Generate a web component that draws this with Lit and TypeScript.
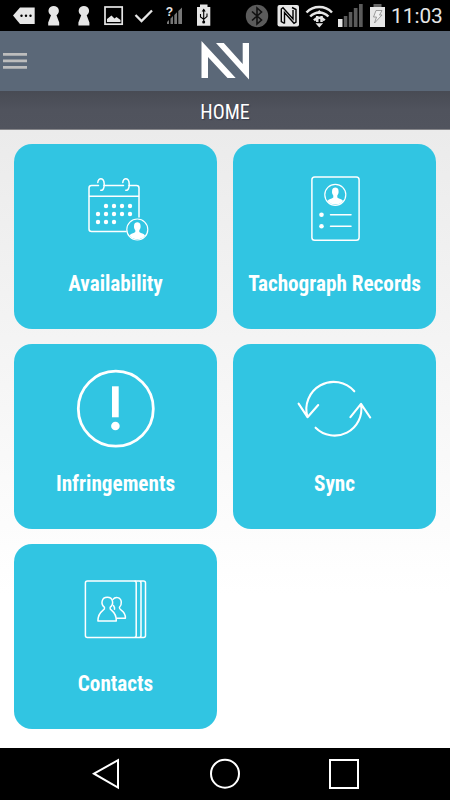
import { LitElement, html, svg, css } from "lit";
import { customElement, property } from "lit/decorators.js";

const person = (x: number, y: number) => svg`
  <g transform="translate(${x} ${y})">
    <circle r="10.5" fill="#31c5e2" stroke="#fff" stroke-width="1.2"/>
    <path fill="#fff" stroke="none" d="M-3.2 -4.2C-3.2 -8.2 3.2 -8.2 3.2 -4.2C3.6 -1.6 2.9 -.4 2 .8V2.6C4 4.2 6.6 4 7.8 6.2C4 11 -4 11 -7.8 6.2C-6.6 4 -4 4.2 -2 2.6V.8C-2.9 -.4 -3.6 -1.6 -3.2 -4.2Z"/>
  </g>`;

const dots = [
  [106, 206], [114, 206], [122, 206], [130, 206],
  [98, 214], [106, 214], [114, 214], [122, 214], [130, 214],
  [98, 222], [106, 222], [114, 222],
];

const tiles = [
  {
    label: "Availability",
    icon: html`<svg viewBox="72 164 88 88" fill="none" stroke="#fff" stroke-width="1.5" stroke-linecap="round">
      <path d="M98.5 185.6H91.5Q89 185.6 89 188.1V229Q89 231.5 91.5 231.5H126M104 185.6H123.5M129 185.6H136.5Q139 185.6 139 188.1V217M89 196.3H139"/>
      <path d="M97.8 182.5C98.3 177.2 104 177.2 104.2 184C104.3 188 103 191 100.8 190.2M122.8 182.5C123.3 177.2 129 177.2 129.2 184C129.3 188 128 191 125.8 190.2"/>
      ${dots.map(([x, y]) => svg`<circle cx=${x} cy=${y} r="2.2" fill="#fff" stroke="none"/>`)}
      ${person(137.3, 229.5)}
    </svg>`,
  },
  {
    label: "Tachograph Records",
    icon: html`<svg viewBox="291 164 88 88" fill="none" stroke="#fff" stroke-width="1.5" stroke-linecap="round">
      <rect x="311.9" y="177" width="47.2" height="63.3" rx="2.8"/>
      ${person(335.3, 194.8)}
      <path d="M330.5 214.7H351M330.5 226.2H351"/>
      <circle cx="321.5" cy="214.7" r="2.3" fill="#fff" stroke="none"/>
      <circle cx="321.5" cy="226.2" r="2.3" fill="#fff" stroke="none"/>
    </svg>`,
  },
  {
    label: "Infringements",
    icon: html`<svg viewBox="72 364 88 88" fill="#fff">
      <circle cx="115.8" cy="408.7" r="37.5" fill="none" stroke="#fff" stroke-width="2.8"/>
      <path d="M112 386.3H118.7V417.3H112Z"/>
      <circle cx="115.4" cy="426" r="4.3"/>
    </svg>`,
  },
  {
    label: "Sync",
    icon: html`<svg viewBox="291 364 88 88" fill="none" stroke="#fff" stroke-width="2.1" stroke-linecap="round" stroke-linejoin="round">
      <path d="M354.3 391.3A27.3 27.3 0 0 0 307.5 417M298.6 403.7L307.5 417.2L318.2 405"/>
      <path d="M315.6 427.7A26.8 26.8 0 0 0 361 404.2M350.4 417.2L361 403.9L370.2 417.5"/>
    </svg>`,
  },
  {
    label: "Contacts",
    icon: html`<svg viewBox="72 564 88 88" fill="none" stroke="#fff" stroke-width="1.5" stroke-linecap="round" stroke-linejoin="round">
      <rect x="85.4" y="580.9" width="50.8" height="56.6" rx="2"/>
      <path d="M135 580.9H139Q141 580.9 141 582.9V635.5Q141 637.5 139 637.5H135M139 580.9H143.5Q145.5 580.9 145.5 582.9V635.5Q145.5 637.5 143.5 637.5H139"/>
      <path d="M104.5 607.4C100.3 604 101.5 597.3 107.3 597.3C113.1 597.3 114.3 604 110.1 607.4C108.800 611 116.5 609.8 116.3 621.1H97.9C98 609.8 105.8 611 104.5 607.4Z"/>
      <path d="M113 599.4C115 596.5 120.8 596.7 121.3 602C121.5 605 120.8 606.2 119.4 607.3C118.5 610.8 125.6 609.3 125.4 618.2H116.8M113.5 605.5L114.5 607.6V609.3"/>
    </svg>`,
  },
];

@customElement("menu-tile")
export class MenuTile extends LitElement {
  @property() label = "";
  static styles = css`
    :host {
      display: flex;
      flex-direction: column;
      align-items: center;
      box-sizing: border-box;
      padding-top: 20px;
      border-radius: 18px;
      background: #31c5e2;
      color: #fff;
      font: 700 21.2px/28px "Roboto Condensed", Roboto, sans-serif;
      font-stretch: 75%;
    }
    .label { margin-top: 18px; white-space: nowrap; }
  `;
  render() {
    return html`<slot></slot><div class="label">${this.label}</div>`;
  }
}

@customElement("status-bar")
export class StatusBar extends LitElement {
  static styles = css`
    :host { display: flex; height: 31px; background: #000; }
    .icons { width: 390px; height: 31px; flex: none; }
    .unknown { font: 700 12px "Liberation Sans", sans-serif; }
    .clock { padding-left: 1px; color: #e6e6e6; font: 400 20.8px/33px Roboto, sans-serif; white-space: nowrap; }
  `;
  render() {
    return html`
      <svg class="icons" viewBox="0 0 390 31" fill="#e6e6e6">
        <path d="M13 15.5L20 7.5H34.7V24H20Z"/>
        <g fill="#000"><circle cx="21.5" cy="15.7" r="1.2"/><circle cx="26" cy="15.7" r="1.2"/><circle cx="30.5" cy="15.7" r="1.2"/></g>
        <path d="M51 15.3C46.5 12 48.5 6 53.7 6C58.9 6 60.9 12 56.5 15.3L59.2 22.5V25.5H48.2V22.5Z"/>
        <path d="M81.2 15.3C76.7 12 78.7 6 83.9 6C89.1 6 91.1 12 86.7 15.3L89.4 22.5V25.5H78.4V22.5Z"/>
        <rect x="105" y="7" width="17.2" height="17.2" fill="none" stroke="#e6e6e6" stroke-width="1.7"/>
        <path d="M107 22V19L111.5 15.5L114.5 18.5L116.5 17L120.5 20V22Z"/>
        <path d="M135.5 15L141.5 21L152 10.5" fill="none" stroke="#e6e6e6" stroke-width="2.3"/>
        <g fill="#777"><path d="M167 24V22L169 20V24ZM170.5 24V18.5L173 16V24ZM174.3 24V15L177 12.3V24ZM178.3 24V11L182 7.5V24Z"/></g>
        <text class="unknown" x="165.8" y="15.8">?</text>
        <path d="M200 4.5H207.5V7H210.3V25.7H197V7H200Z"/>
        <path d="M203.7 9.5V22.5M200.5 14V17L203.7 19.3L207 16.5V13.5" fill="none" stroke="#000" stroke-width="1.1"/>
        <path d="M203.7 8.5L205.7 11.5H201.7Z" fill="#000"/><circle cx="203.7" cy="22" r="1.5" fill="#000"/>
        <circle cx="257" cy="16" r="11.2" fill="#5b5b5b"/>
        <path d="M252 11.5L261.5 20L257 24V8L261.5 12L252 20.5" fill="none" stroke="#111" stroke-width="1.6"/>
        <rect x="277.5" y="5" width="21.5" height="21.5" rx="2"/>
        <path d="M284.5 23.5L281.3 21.7V9L283 7.7L293 19V10M284.5 23.5V12.5L294 23.3L296 22V9.5L292 7.5" fill="none" stroke="#000" stroke-width="1.4"/>
        <g fill="none" stroke="#e6e6e6" stroke-width="2.5"><path d="M306.5 12.5C313.5 5.2 325 5.2 332 12.5M310.2 16.5C315.4 11 323.2 11 328.4 16.5M314 20.3C317 17 321.7 17 324.7 20.3"/></g>
        <path d="M319.3 10L323 14H315.6ZM319.3 27.5L315.5 23.2H323.1Z"/>
        <path d="M316 16H318.5V22H316ZM320.3 16H322.8V22H320.3Z"/>
        <path d="M338 19H342.5V27H338Z"/>
        <g fill="#5b5b5b"><path d="M343.8 16H347.3V27H343.8ZM348.8 12H352.3V27H348.8ZM353.8 8H357.5V27H353.8ZM359 4H362.7V27H359Z"/></g>
        <path d="M373.5 4H381.5V8H373.5Z" fill="#666"/><path d="M370 7H385V27H370Z"/>
        <path d="M376 10.5H382L379.5 15H382L374.5 23L376.5 17H373.5Z" fill="#eee" stroke="#888" stroke-width=".8"/>
      </svg>
      <div class="clock">11:03</div>`;
  }
}

@customElement("app-root")
export class AppRoot extends LitElement {
  static styles = css`
    :host { display: flex; flex-direction: column; width: 450px; height: 800px; overflow: hidden; }
    status-bar { flex: none; }
    .header {
      display: grid; grid-template-columns: 1fr auto 1fr; align-items: center; flex: none;
      box-sizing: border-box; height: 60px; padding: 0 3px; background: #5b6878;
    }
    .menu { width: 24px; height: 18px; display: block; }
    .logo { width: 50px; height: 40px; display: block; }
    .title {
      box-sizing: border-box; height: 39px; padding-top: 1px; text-align: center; color: #fff; flex: none;
      background: linear-gradient(#484b54, #50535d 50%, #51545e);
      border-bottom: 1px solid #858589;
      text-shadow: 1px 1px 1px rgba(35, 42, 65, 0.6);
      font: 400 20px/40px "Roboto Condensed", Roboto, sans-serif; font-stretch: 75%;
    }
    .content {
      flex: 1; box-sizing: border-box; padding: 14px;
      display: grid; grid-template-columns: 203px 203px; grid-auto-rows: 185px;
      column-gap: 16px; row-gap: 15px;
      background: linear-gradient(#ebebeb, #fff 75%);
    }
    .content svg { display: block; width: 88px; height: 88px; flex: none; }
    .nav { height: 52px; background: #000; display: block; flex: none; }
  `;
  render() {
    return html`
      <status-bar></status-bar>
      <div class="header">
        <svg class="menu" viewBox="0 0 24 18" fill="#bdbdbd"><path d="M0 1H24V3.7H0ZM0 7.5H24V10.2H0ZM0 14H24V16.7H0Z"/></svg>
        <svg class="logo" viewBox="200 41 50 40" fill="#fff">
          <path d="M201.5 41L235.7 78H227.5L208 57V78H201.5ZM216 43H223.8L242.7 64V43H249V79.5Z"/>
        </svg>
      </div>
      <div class="title">HOME</div>
      <div class="content">
        ${tiles.map((t) => html`<menu-tile .label=${t.label}>${t.icon}</menu-tile>`)}
      </div>
      <svg class="nav" viewBox="0 748 450 52" fill="none" stroke="#fff" stroke-width="2">
        <path d="M94 773.7L118 760.2V787.5Z"/>
        <circle cx="225" cy="773.7" r="14"/>
        <rect x="330" y="760" width="28" height="28"/>
      </svg>`;
  }
}
